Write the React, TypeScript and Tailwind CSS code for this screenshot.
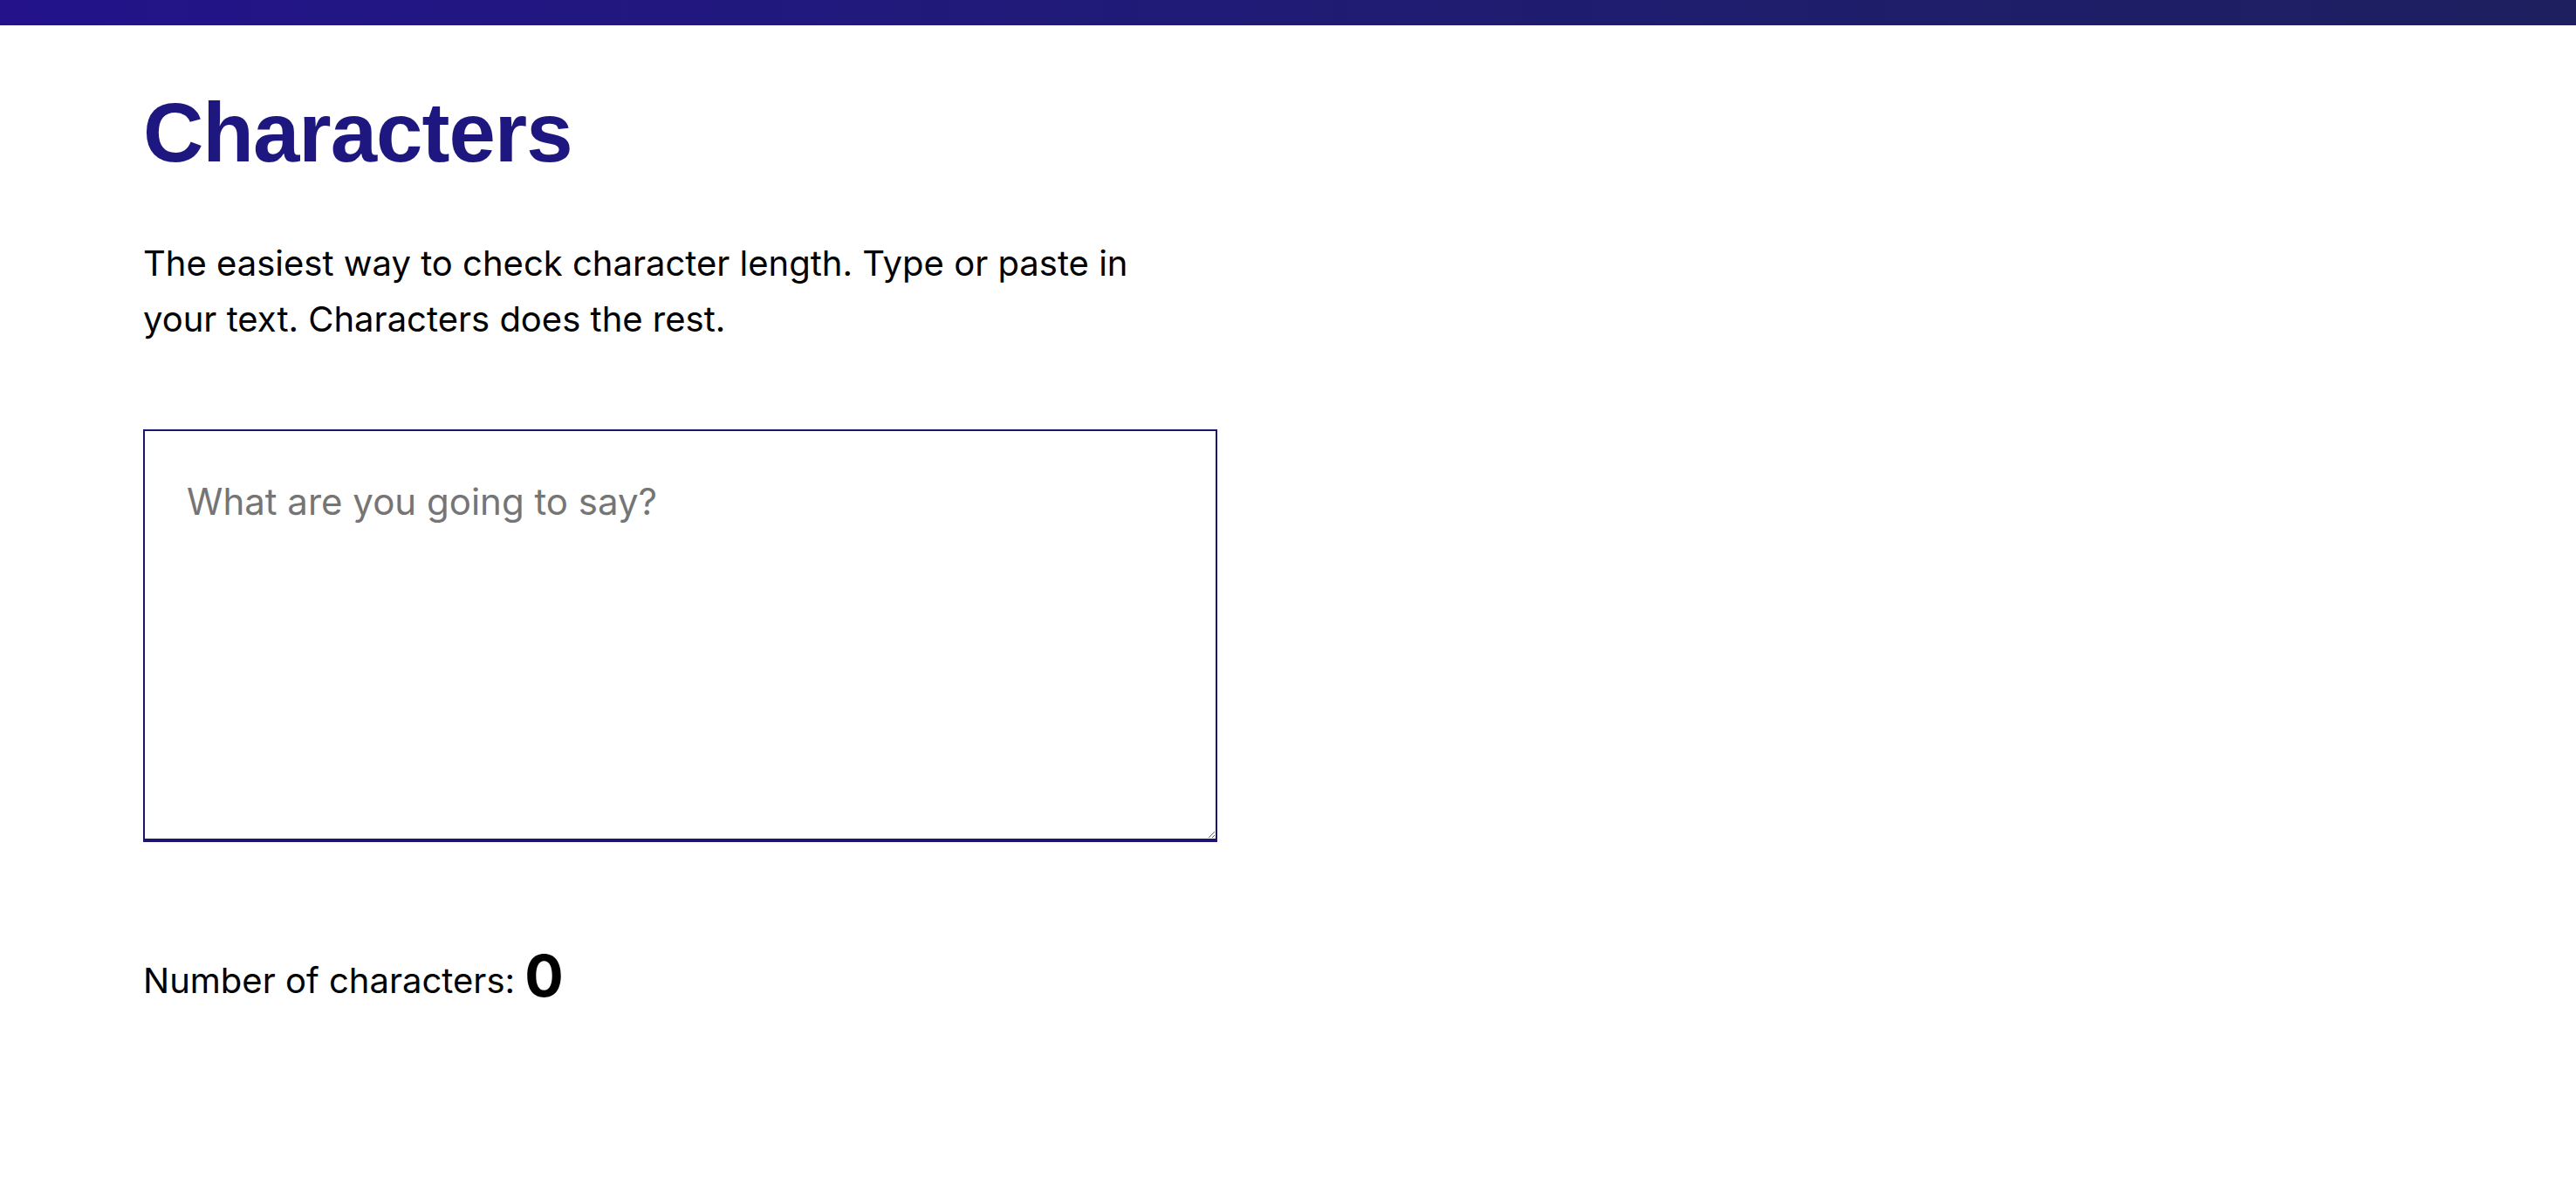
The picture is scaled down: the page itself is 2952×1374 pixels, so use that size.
import React, { useState } from "react"

const titleFont = "font-['Liberation_Sans','Helvetica_Neue',Arial,sans-serif]"
const bodyFont = "font-['Inter','Liberation_Sans',Arial,sans-serif]"

export default function App() {
    const [text, setText] = useState("")

    return (
        <div className={`min-h-screen w-full bg-white text-black ${bodyFont}`}>
            <div className="h-[29px] w-full bg-gradient-to-r from-[#23128a] to-[#1d1f5f]"></div>

            <main className="px-[164px] pt-[75px] pb-16">
                <h1 className={`text-[96px] font-bold leading-none tracking-[-1px] text-[#1f1780] ${titleFont}`}>
                    Characters
                </h1>

                <p className="mt-[70px] max-w-[1160px] text-[40px] leading-[64px]">
                    The easiest way to check character length. Type or paste in your text. Characters does the rest.
                </p>

                <textarea
                    value={text}
                    onChange={(e) => setText(e.target.value)}
                    placeholder="What are you going to say?"
                    className={`mt-[94px] block h-[473px] w-[1231px] resize border-2 border-b-4 border-[#1c1572] bg-white px-[48px] pt-[49px] text-[42px] leading-[1.5] text-black outline-none placeholder:text-[#757575] ${bodyFont}`}
                ></textarea>

                <p className="mt-[120px] text-[40px] leading-[64px]">
                    Number of characters:{" "}
                    <span className="align-[-4px] text-[66px] font-bold leading-none">{text.length}</span>
                </p>
            </main>
        </div>
    )
}
